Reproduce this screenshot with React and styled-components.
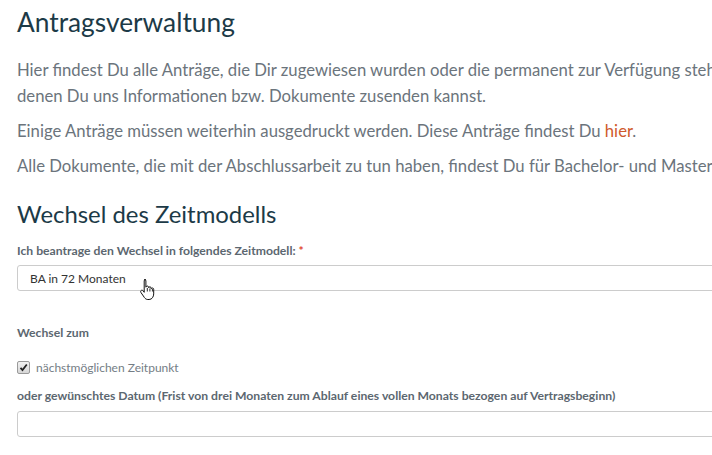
import React from 'react'
import styled, { createGlobalStyle } from 'styled-components'

const GlobalStyle = createGlobalStyle`
  html, body {
    margin: 0;
    padding: 0;
    background: #fff;
    overflow: hidden;
  }
  body {
    font-family: Lato, "Open Sans", sans-serif;
  }
`

const Page = styled.div`
  width: 900px;
  padding: 4px 17px 0;
`

const Title = styled.h1`
  margin: 0 0 17px;
  font-size: 26.3px;
  font-weight: 400;
  line-height: 36px;
  color: #1c3a47;
`

const SubTitle = styled.h2`
  margin: 19px 0 13px;
  font-size: 23.9px;
  font-weight: 400;
  line-height: 32px;
  color: #1c3a47;
`

const Text = styled.p`
  margin: 0 0 9px;
  font-size: 16.7px;
  line-height: 26px;
  color: #6b747c;
  white-space: nowrap;
`

const Link = styled.a`
  color: #cf5a2c;
  text-decoration: none;
`

const Field = styled.div`
  margin-bottom: ${({ gap }) => gap || 0}px;
`

const Label = styled.label`
  display: block;
  margin-bottom: ${({ gap }) => gap || 0}px;
  font-size: 12.2px;
  font-weight: 700;
  line-height: 16px;
  color: #5c6770;
`

const Required = styled.span`
  color: #e0442c;
`

const Box = styled.div`
  position: relative;
  width: 860px;
  height: 24px;
  border: 1px solid #cccccc;
  border-radius: 3px;
  padding: 0 12px;
  display: flex;
  align-items: center;
  font-size: 12px;
  color: #333;
`

const Cursor = styled.svg`
  position: absolute;
  left: 121px;
  top: 12px;
`

const CheckRow = styled.div`
  display: flex;
  align-items: center;
  gap: 6px;
  height: 13px;
  margin-bottom: 14px;
  font-size: 12px;
  color: #747d85;
`

const CheckBox = styled.span`
  width: 11px;
  height: 11px;
  border: 1px solid #9a9a9a;
  border-radius: 2px;
  background: linear-gradient(#f2f2f2, #d6d6d6);
  display: flex;
  align-items: center;
  justify-content: center;
`

const App = () => (
  <Page>
    <GlobalStyle />
    <Title>Antragsverwaltung</Title>
    <Text>
      Hier findest Du alle Anträge, die Dir zugewiesen wurden oder die permanent zur Verfügung stehen, und mit
      <br />
      denen Du uns Informationen bzw. Dokumente zusenden kannst.
    </Text>
    <Text>
      Einige Anträge müssen weiterhin ausgedruckt werden. Diese Anträge findest Du <Link href='#'>hier</Link>.
    </Text>
    <Text>
      Alle Dokumente, die mit der Abschlussarbeit zu tun haben, findest Du für Bachelor- und Masterarbeiten unter
    </Text>

    <SubTitle>Wechsel des Zeitmodells</SubTitle>

    <Field gap={34}>
      <Label gap={6}>Ich beantrage den Wechsel in folgendes Zeitmodell: <Required>*</Required></Label>
      <Box>
        BA in 72 Monaten
        <Cursor width='18' height='22' viewBox='0 0 18 22'>
          <path
            d='M5.5 1.5c.8 0 1.4.6 1.4 1.4v6.3c.2-.8.8-1.2 1.4-1.2.8 0 1.3.6 1.3 1.4v.4c.2-.6.7-1 1.3-1 .8 0 1.3.6 1.3 1.4v.6c.2-.5.7-.8 1.2-.8.8 0 1.3.6 1.3 1.4v4.5c0 2.6-1.6 5.6-4.6 5.6H8.8c-1.6 0-2.6-.9-3.4-2L2 14.6c-.6-.9-.4-1.800.3-2.2.7-.4 1.5-.1 2 .6l.9 1.3V2.9c0-.8.5-1.4 1.3-1.4z'
            fill='#fff'
            stroke='#111'
            strokeWidth='1'
          />
          <path d='M8.3 10v3.5M10.9 10.5v3M13.4 11v2.5' stroke='#111' strokeWidth='0.9' />
        </Cursor>
      </Box>
    </Field>

    <Field gap={20}>
      <Label>Wechsel zum</Label>
    </Field>

    <CheckRow>
      <CheckBox>
        <svg width='9' height='9' viewBox='0 0 9 9'>
          <path d='M1.5 4.8l2 2.2L7.8 1.5' fill='none' stroke='#222' strokeWidth='1.8' />
        </svg>
      </CheckBox>
      nächstmöglichen Zeitpunkt
    </CheckRow>

    <Field>
      <Label gap={7}>oder gewünschtes Datum (Frist von drei Monaten zum Ablauf eines vollen Monats bezogen auf Vertragsbeginn)</Label>
      <Box />
    </Field>
  </Page>
)

export default App
